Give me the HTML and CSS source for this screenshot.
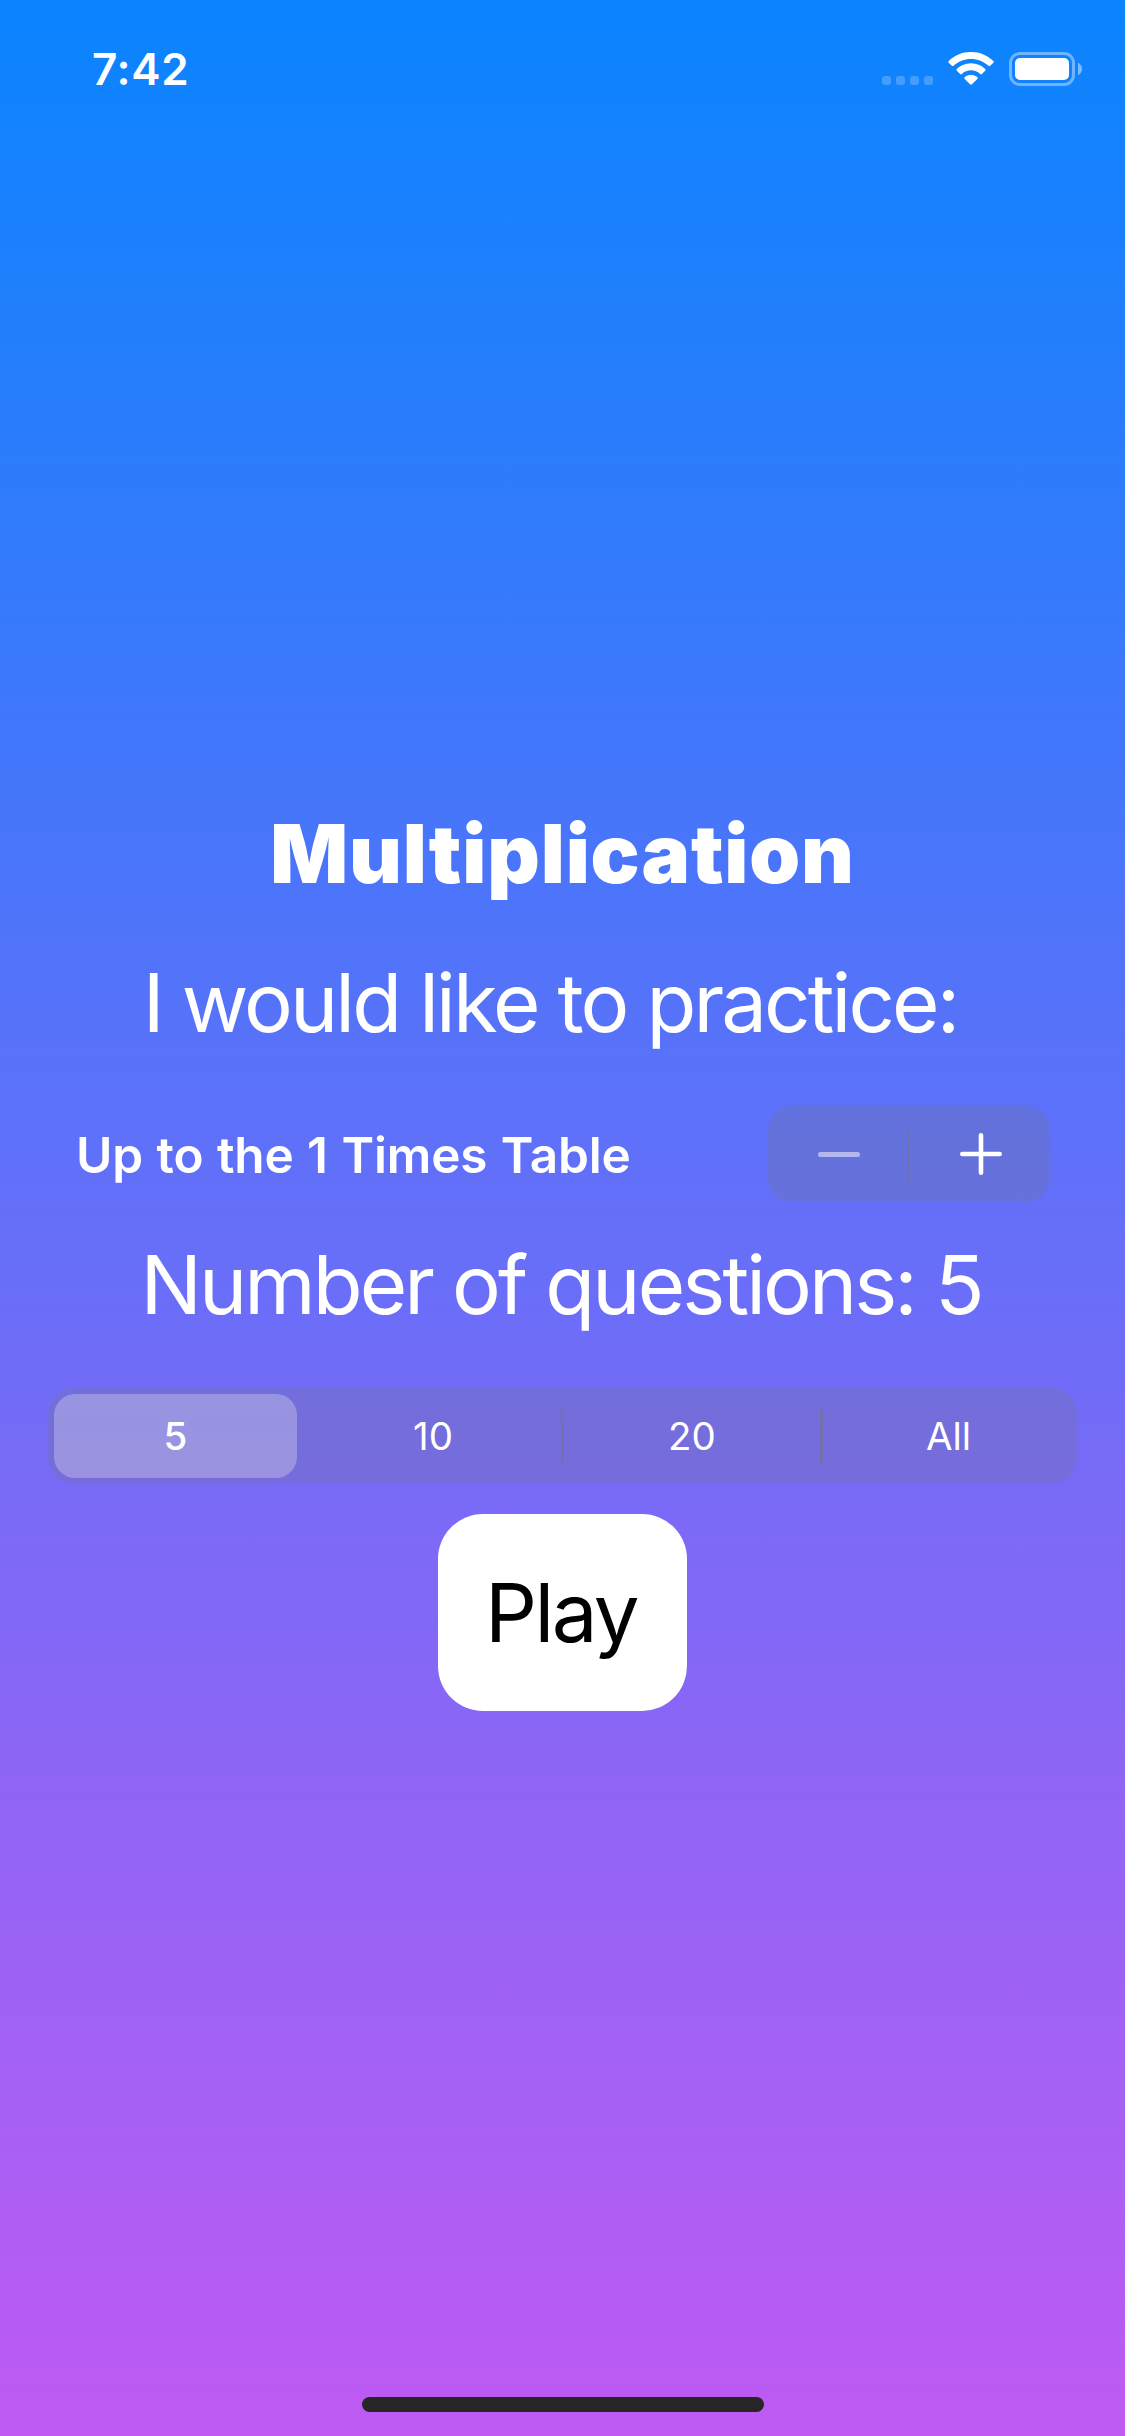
FILE: index.html
```html
<!DOCTYPE html>
<html lang="en">
<head>
<meta charset="utf-8">
<title>Multiplication</title>
<link rel="stylesheet" href="styles.css">
</head>
<body>
<div class="screen">
  <header class="status">
    <span class="time">7:42</span>
    <div class="indicators">
      <div class="cellular"><i></i><i></i><i></i><i></i></div>
      <svg class="wifi" width="46" height="34" viewBox="0 0 46 34" fill="#fff">
        <path d="M23 0C32 0 39.500 3.400 45.300 8.900Q46.200 9.800 45.300 10.700L42.200 13.800Q41.400 14.600 40.500 13.800C35.600 9.300 29.600 6.900 23 6.900S10.400 9.300 5.500 13.800Q4.600 14.600 3.800 13.800L.7 10.700Q-.2 9.800 .7 8.900C6.500 3.400 14 0 23 0Z"/>
        <path d="M23 11.200C28.600 11.200 33.400 13.300 37.200 16.900Q38.100 17.800 37.200 18.700L33.900 22Q33.100 22.800 32.200 22C29.600 19.600 26.500 18.300 23 18.300S16.400 19.600 13.800 22Q12.900 22.800 12.100 22L8.800 18.700Q7.900 17.800 8.800 16.900C12.600 13.300 17.400 11.200 23 11.200Z"/>
        <path d="M23 22.700C25.500 22.700 27.600 23.600 29.300 25.100Q30.100 26 29.300 26.900L23.900 32.300Q23 33.200 22.100 32.300L16.700 26.900Q15.900 26 16.700 25.100C18.400 23.600 20.500 22.700 23 22.700Z"/>
      </svg>
      <svg class="battery" width="74" height="34" viewBox="0 0 74 34">
        <rect x="1.500" y="1.500" width="63" height="31" rx="9.500" fill="none" stroke="#fff" stroke-opacity=".4" stroke-width="3"/>
        <rect x="6" y="6" width="54" height="22" rx="5" fill="#fff"/>
        <path d="M69 10.800C71.400 11.800 73 14.200 73 17S71.400 22.200 69 23.200Z" fill="#fff" fill-opacity=".45"/>
      </svg>
    </div>
  </header>

  <main class="content">
    <h1 class="title">Multiplication</h1>
    <h2 class="heading practice">I would like to practice:</h2>
    <div class="table-row">
      <span class="table-label">Up to the 1 Times Table</span>
      <div class="stepper">
        <button class="step minus" aria-label="Decrease"><svg width="42" height="42" viewBox="0 0 42 42"><path d="M2.500 21.500H39.500" stroke="#fff" stroke-opacity=".5" stroke-width="5" stroke-linecap="round"/></svg></button>
        <span class="divider"></span>
        <button class="step plus" aria-label="Increase"><svg width="42" height="42" viewBox="0 0 42 42"><path d="M2.300 21H39.700M21 2.300V39.700" stroke="#fff" stroke-width="4.600" stroke-linecap="round"/></svg></button>
      </div>
    </div>
    <h2 class="heading questions">Number of questions: 5</h2>
    <div class="segments">
      <button class="segment selected">5</button>
      <button class="segment">10</button>
      <span class="divider"></span>
      <button class="segment">20</button>
      <span class="divider"></span>
      <button class="segment last">All</button>
    </div>
    <button class="play">Play</button>
  </main>
  <div class="home-indicator"></div>
</div>
</body>
</html>
```
FILE: styles.css
```css
* { box-sizing: border-box; }
body { margin: 0; }
button { border: 0; padding: 0; margin: 0; background: none; color: inherit; font: inherit; letter-spacing: inherit; }
.screen {
  width: 1125px;
  height: 2436px;
  display: flex;
  flex-direction: column;
  align-items: center;
  background: linear-gradient(#0a84ff, #bf5af2);
  color: #fff;
  font-family: Inter, "Liberation Sans", sans-serif;
  white-space: nowrap;
}
.status {
  width: 100%;
  height: 138px;
  padding: 0 43px 0 92px;
  display: flex;
  justify-content: space-between;
  align-items: center;
}
.time { font-size: 44px; font-weight: 600; line-height: 60px; letter-spacing: .7px; }
.indicators { display: flex; align-items: flex-end; }
.cellular { display: flex; gap: 5px; margin: 0 15px 1px 0; }
.cellular i { width: 9px; height: 9px; border-radius: 3px; background: rgba(255, 255, 255, .22); }
.wifi { margin-right: 15px; }
.battery { margin-right: -1px; }
.content {
  width: 100%;
  flex: 1;
  padding: 666px 48px 0;
  display: flex;
  flex-direction: column;
  align-items: center;
}
.title { margin: 0; font-size: 81.500px; font-weight: 900; line-height: 100px; letter-spacing: .85px; }
.heading { margin: 0; font-size: 81.500px; font-weight: 400; line-height: 100px; letter-spacing: -2.900px; }
.practice { margin-top: 49px; padding-right: 25px; }
.table-row {
  align-self: stretch;
  height: 96px;
  margin-top: 53px;
  padding: 0 27px 0 28px;
  display: flex;
  justify-content: space-between;
  align-items: center;
}
.table-label { font-size: 49.500px; font-weight: 600; line-height: 60px; letter-spacing: -.15px; word-spacing: 1.200px; padding-top: 1px; }
.stepper {
  width: 282px;
  height: 96px;
  display: flex;
  align-items: center;
  border-radius: 25px;
  background: rgba(118, 118, 128, .24);
}
.step { flex: 0 0 139px; display: flex; justify-content: center; }
.minus { padding-left: 3px; }
.plus { padding-left: 2px; }
.divider { width: 3px; height: 54px; border-radius: 2px; background: rgba(118, 118, 128, .5); }
.questions { margin-top: 33px; padding-right: 3px; }
.segments {
  width: 1029px;
  height: 96px;
  margin-top: 53px;
  padding: 6px;
  display: flex;
  align-items: center;
  border-radius: 26px;
  background: rgba(118, 118, 128, .24);
  font-size: 38.500px;
}
.segment { flex: 0 0 256px; height: 84px; }
.selected { flex: 0 0 243px; margin-right: 8px; border-radius: 21px; background: rgba(250, 250, 240, .27); font-weight: 550; }
.last { flex: 1; padding-left: 3px; }
.play {
  width: 249px;
  height: 197px;
  margin-top: 30px;
  padding-right: 3px;
  border-radius: 45px;
  background: #fff;
  color: #000;
  font-size: 81.500px;
  letter-spacing: -2.600px;
}
.home-indicator { width: 402px; height: 15px; margin-bottom: 24px; border-radius: 8px; background: #262626; }
```
